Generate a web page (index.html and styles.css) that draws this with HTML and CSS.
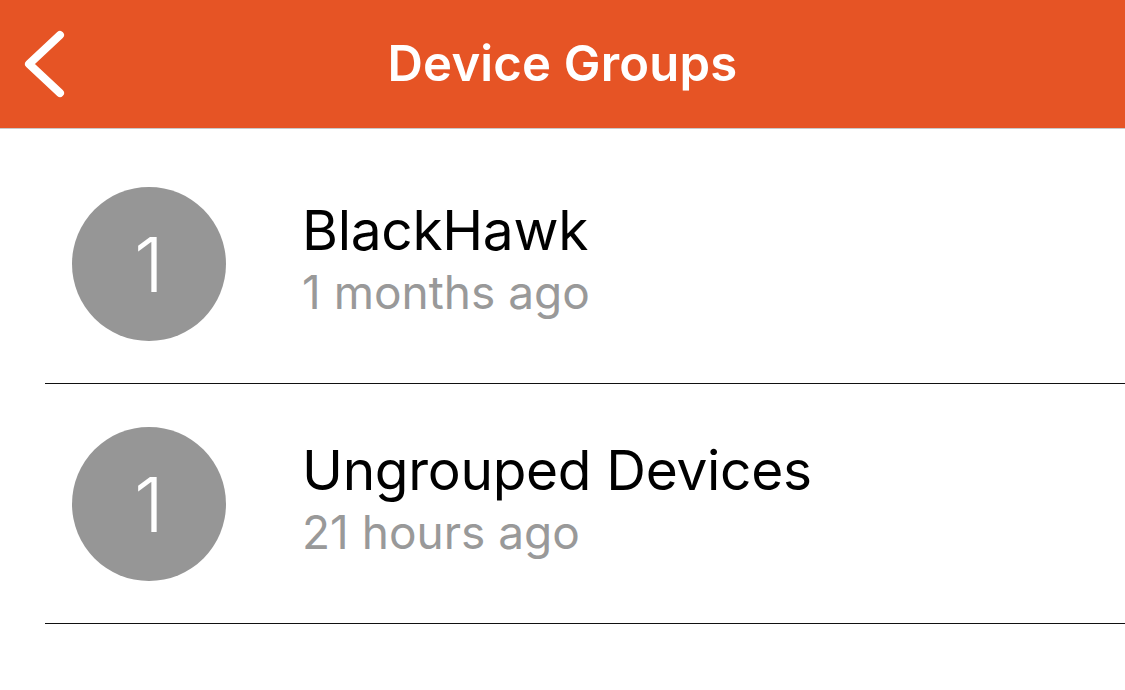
FILE: index.html
```html
<html>
  <head>
    <link rel="stylesheet" href="styles.css">
  </head>
  <body>
    <div class="navbar">
      <a class="back">
        <svg width="44" height="72" viewBox="0 0 44 72">
          <polyline points="36,8 5,37 36,66" fill="none" stroke="#fff" stroke-width="8" stroke-linecap="round" stroke-linejoin="round"/>
        </svg>
      </a>
      <div class="title">Device Groups</div>
    </div>

    <div class="list">
      <div class="row">
        <div class="badge">1</div>
        <div class="info">
          <div class="name">BlackHawk</div>
          <div class="when">1 months ago</div>
        </div>
      </div>
      <div class="row">
        <div class="badge">1</div>
        <div class="info">
          <div class="name">Ungrouped Devices</div>
          <div class="when">21 hours ago</div>
        </div>
      </div>
    </div>
  </body>
</html>
```

FILE: styles.css
```css
body { margin: 0; font-family: Inter, "Noto Sans", sans-serif; background: #fff; -webkit-font-smoothing: antialiased; }
.navbar { height: 128px; background: #e65425; border-bottom: 1px solid #c9c9c9; display: flex; align-items: center; justify-content: center; position: relative; }
.back { position: absolute; left: 24px; top: 27px; }
.title { color: #fff; font-size: 49px; font-weight: 600; letter-spacing: 0.2px; margin-top: -2px; }
.list { padding-top: 15px; }
.row { height: 239px; display: flex; align-items: center; margin-left: 45px; border-bottom: 1px solid #111; }
.badge { width: 154px; height: 154px; border-radius: 50%; background: #969696; color: #fff; font-size: 76px; font-weight: 300; display: flex; align-items: center; justify-content: center; margin-left: 27px; }
.info { margin-left: 76px; margin-top: -10px; }
.name { font-size: 55px; color: #000; line-height: 66px; letter-spacing: -0.3px; }
.when { font-size: 46px; color: #999; line-height: 58px; }
```
